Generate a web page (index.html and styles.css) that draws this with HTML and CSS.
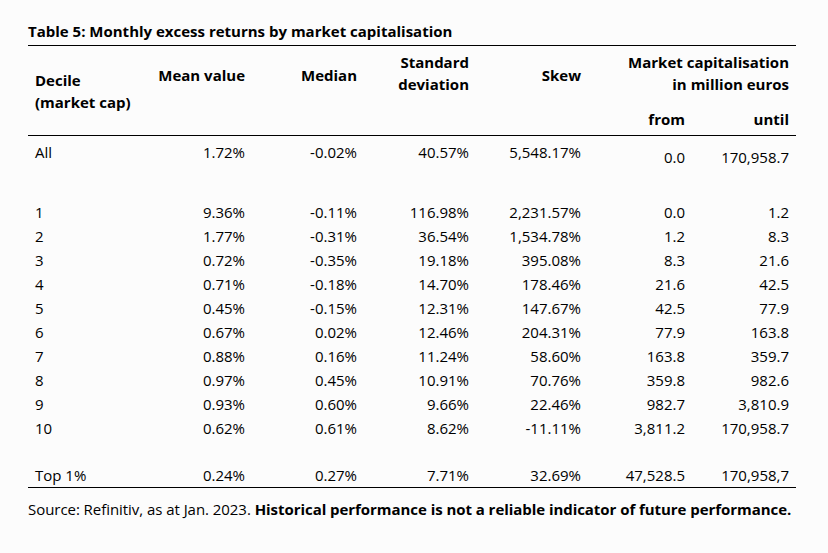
FILE: index.html
```html
<!DOCTYPE html>
<html lang="en">
<head>
<meta charset="utf-8">
<title>Table 5: Monthly excess returns by market capitalisation</title>
<link rel="stylesheet" href="styles.css">
</head>
<body>
<div class="page">
  <h1 class="title">Table 5: Monthly excess returns by market capitalisation</h1>
  <div class="table">
    <div class="head">
      <div class="hc decile">Decile<br>(market cap)</div>
      <div class="hc mid c2">Mean value</div>
      <div class="hc mid c3">Median</div>
      <div class="hc top c4">Standard<br>deviation</div>
      <div class="hc mid c5">Skew</div>
      <div class="hc top cap">Market capitalisation<br>in million euros</div>
      <div class="hc sub c6">from</div>
      <div class="hc sub c7">until</div>
    </div>
    <div class="row all">
      <div class="cell first">All</div>
      <div class="cell">1.72%</div>
      <div class="cell">-0.02%</div>
      <div class="cell">40.57%</div>
      <div class="cell">5,548.17%</div>
      <div class="cell low">0.0</div>
      <div class="cell low">170,958.7</div>
    </div>
    <div class="spacer"></div>
    <div class="row"><div class="cell first">1</div><div class="cell">9.36%</div><div class="cell">-0.11%</div><div class="cell">116.98%</div><div class="cell">2,231.57%</div><div class="cell">0.0</div><div class="cell">1.2</div></div>
    <div class="row"><div class="cell first">2</div><div class="cell">1.77%</div><div class="cell">-0.31%</div><div class="cell">36.54%</div><div class="cell">1,534.78%</div><div class="cell">1.2</div><div class="cell">8.3</div></div>
    <div class="row"><div class="cell first">3</div><div class="cell">0.72%</div><div class="cell">-0.35%</div><div class="cell">19.18%</div><div class="cell">395.08%</div><div class="cell">8.3</div><div class="cell">21.6</div></div>
    <div class="row"><div class="cell first">4</div><div class="cell">0.71%</div><div class="cell">-0.18%</div><div class="cell">14.70%</div><div class="cell">178.46%</div><div class="cell">21.6</div><div class="cell">42.5</div></div>
    <div class="row"><div class="cell first">5</div><div class="cell">0.45%</div><div class="cell">-0.15%</div><div class="cell">12.31%</div><div class="cell">147.67%</div><div class="cell">42.5</div><div class="cell">77.9</div></div>
    <div class="row"><div class="cell first">6</div><div class="cell">0.67%</div><div class="cell">0.02%</div><div class="cell">12.46%</div><div class="cell">204.31%</div><div class="cell">77.9</div><div class="cell">163.8</div></div>
    <div class="row"><div class="cell first">7</div><div class="cell">0.88%</div><div class="cell">0.16%</div><div class="cell">11.24%</div><div class="cell">58.60%</div><div class="cell">163.8</div><div class="cell">359.7</div></div>
    <div class="row"><div class="cell first">8</div><div class="cell">0.97%</div><div class="cell">0.45%</div><div class="cell">10.91%</div><div class="cell">70.76%</div><div class="cell">359.8</div><div class="cell">982.6</div></div>
    <div class="row"><div class="cell first">9</div><div class="cell">0.93%</div><div class="cell">0.60%</div><div class="cell">9.66%</div><div class="cell">22.46%</div><div class="cell">982.7</div><div class="cell">3,810.9</div></div>
    <div class="row"><div class="cell first">10</div><div class="cell">0.62%</div><div class="cell">0.61%</div><div class="cell">8.62%</div><div class="cell">-11.11%</div><div class="cell">3,811.2</div><div class="cell">170,958.7</div></div>
    <div class="spacer short"></div>
    <div class="row last"><div class="cell first">Top 1%</div><div class="cell">0.24%</div><div class="cell">0.27%</div><div class="cell">7.71%</div><div class="cell">32.69%</div><div class="cell">47,528.5</div><div class="cell">170,958,7</div></div>
  </div>
  <p class="source">Source: Refinitiv, as at Jan. 2023. <strong>Historical performance is not a reliable indicator of future performance.</strong></p>
</div>
</body>
</html>
```

FILE: styles.css
```css
html, body {
  margin: 0;
  padding: 0;
  background: #fcfcfc;
}

body {
  font-family: "Open Sans", "Liberation Sans", sans-serif;
  font-size: 15px;
  color: #000;
}

.page {
  padding: 20px 0 0 28px;
  width: 768px;
}

.title {
  margin: 0 0 3px 0;
  font-size: 15px;
  font-weight: 700;
  line-height: 22px;
}

.table {
  width: 768px;
}

.head {
  display: grid;
  grid-template-columns: 112px 112px 112px 112px 112px 104px 104px;
  grid-template-rows: 58px 31px;
  border-top: 1px solid #000;
  border-bottom: 1px solid #000;
  font-weight: 700;
  line-height: 22px;
}

.hc {
  padding-right: 7px;
  text-align: right;
}

.decile {
  grid-column: 1;
  grid-row: 1 / 3;
  align-self: center;
  text-align: left;
  padding-left: 7px;
  padding-right: 0;
}

.mid { align-self: center; grid-row: 1; }
.top { align-self: start; padding-top: 5px; grid-row: 1; }
.c2 { grid-column: 2; }
.c3 { grid-column: 3; }
.c4 { grid-column: 4; }
.c5 { grid-column: 5; }
.cap { grid-column: 6 / 8; }
.sub { grid-row: 2; align-self: end; padding-bottom: 5px; }
.c6 { grid-column: 6; }
.c7 { grid-column: 7; }

.row {
  display: grid;
  grid-template-columns: 112px 112px 112px 112px 112px 104px 104px;
  height: 24px;
  line-height: 24px;
}

.cell {
  text-align: right;
  padding-right: 7px;
  white-space: nowrap;
}

.cell.first {
  text-align: left;
  padding-left: 7px;
  padding-right: 0;
}

.row.all {
  height: 40px;
  line-height: 22px;
}

.row.all .cell {
  padding-top: 5px;
}

.row.all .cell.low {
  padding-top: 10px;
}

.spacer {
  height: 24px;
}

.spacer.short {
  height: 23px;
}

.row.last {
  border-bottom: 1px solid #000;
}

.source {
  margin: 10px 0 0 0;
  line-height: 22px;
  white-space: nowrap;
  letter-spacing: -0.05px;
}

.source strong {
  font-weight: 700;
}
```
